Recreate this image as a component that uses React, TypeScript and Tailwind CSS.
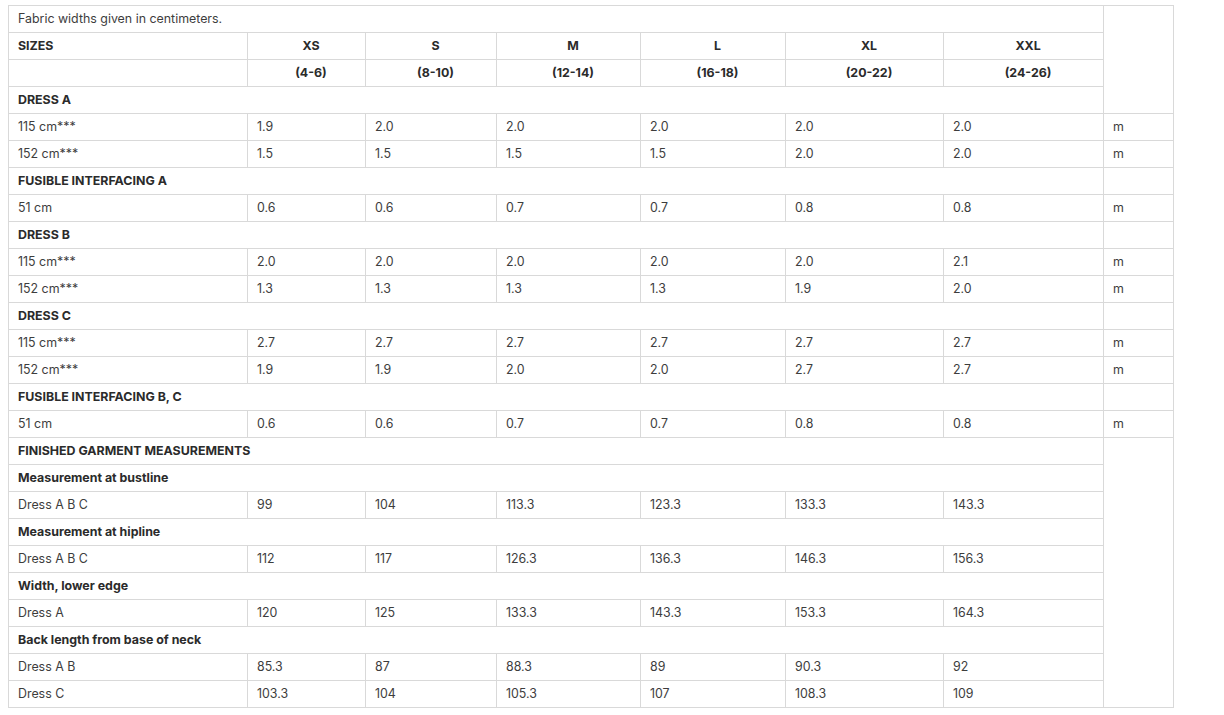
import React from "react";

type Row =
  | { kind: "section"; label: string; unit?: "empty" | "span" | "none" }
  | { kind: "data"; label: string; values: string[]; unit?: boolean };

const rows: Row[] = [
  { kind: "section", label: "DRESS A", unit: "none" },
  { kind: "data", label: "115 cm***", values: ["1.9", "2.0", "2.0", "2.0", "2.0", "2.0"], unit: true },
  { kind: "data", label: "152 cm***", values: ["1.5", "1.5", "1.5", "1.5", "2.0", "2.0"], unit: true },
  { kind: "section", label: "FUSIBLE INTERFACING A", unit: "empty" },
  { kind: "data", label: "51 cm", values: ["0.6", "0.6", "0.7", "0.7", "0.8", "0.8"], unit: true },
  { kind: "section", label: "DRESS B", unit: "empty" },
  { kind: "data", label: "115 cm***", values: ["2.0", "2.0", "2.0", "2.0", "2.0", "2.1"], unit: true },
  { kind: "data", label: "152 cm***", values: ["1.3", "1.3", "1.3", "1.3", "1.9", "2.0"], unit: true },
  { kind: "section", label: "DRESS C", unit: "empty" },
  { kind: "data", label: "115 cm***", values: ["2.7", "2.7", "2.7", "2.7", "2.7", "2.7"], unit: true },
  { kind: "data", label: "152 cm***", values: ["1.9", "1.9", "2.0", "2.0", "2.7", "2.7"], unit: true },
  { kind: "section", label: "FUSIBLE INTERFACING B, C", unit: "empty" },
  { kind: "data", label: "51 cm", values: ["0.6", "0.6", "0.7", "0.7", "0.8", "0.8"], unit: true },
  { kind: "section", label: "FINISHED GARMENT MEASUREMENTS", unit: "span" },
  { kind: "section", label: "Measurement at bustline", unit: "none" },
  { kind: "data", label: "Dress A B C", values: ["99", "104", "113.3", "123.3", "133.3", "143.3"] },
  { kind: "section", label: "Measurement at hipline", unit: "none" },
  { kind: "data", label: "Dress A B C", values: ["112", "117", "126.3", "136.3", "146.3", "156.3"] },
  { kind: "section", label: "Width, lower edge", unit: "none" },
  { kind: "data", label: "Dress A", values: ["120", "125", "133.3", "143.3", "153.3", "164.3"] },
  { kind: "section", label: "Back length from base of neck", unit: "none" },
  { kind: "data", label: "Dress A B", values: ["85.3", "87", "88.3", "89", "90.3", "92"] },
  { kind: "data", label: "Dress C", values: ["103.3", "104", "105.3", "107", "108.3", "109"] },
];

const sizes = [
  { name: "XS", range: "(4-6)" },
  { name: "S", range: "(8-10)" },
  { name: "M", range: "(12-14)" },
  { name: "L", range: "(16-18)" },
  { name: "XL", range: "(20-22)" },
  { name: "XXL", range: "(24-26)" },
];

const cell = "border border-[#d9d9d9] h-[27px] pl-[9px] pr-0 py-0 align-middle";
const bold = "font-bold text-[#2b2b2b]";

export default function App() {
  return (
    <div className="bg-white min-h-[715px] pl-2 pt-[5px] text-[#3d3d3d] text-[12.4px] font-['Inter',sans-serif]">
      <table className="border-collapse table-fixed w-[1165px]">
        <colgroup>
          <col className="w-[239px]" />
          <col className="w-[118px]" />
          <col className="w-[131px]" />
          <col className="w-[144px]" />
          <col className="w-[145px]" />
          <col className="w-[158px]" />
          <col className="w-[160px]" />
          <col className="w-[70px]" />
        </colgroup>
        <tbody>
          <tr>
            <td colSpan={7} className={cell}>Fabric widths given in centimeters.</td>
            <td rowSpan={4} className={cell}></td>
          </tr>
          <tr>
            <td className={`${cell} ${bold}`}>SIZES</td>
            {sizes.map((s) => (
              <td key={s.name} className={`${cell} ${bold} text-center`}>{s.name}</td>
            ))}
          </tr>
          <tr>
            <td className={cell}></td>
            {sizes.map((s) => (
              <td key={s.name} className={`${cell} ${bold} text-center`}>{s.range}</td>
            ))}
          </tr>
          {rows.map((row, i) =>
            row.kind === "section" ? (
              <tr key={i}>
                <td colSpan={7} className={`${cell} ${bold}`}>{row.label}</td>
                {row.unit === "empty" && <td className={cell}></td>}
                {row.unit === "span" && <td rowSpan={10} className={cell}></td>}
              </tr>
            ) : (
              <tr key={i}>
                <td className={cell}>{row.label}</td>
                {row.values.map((v, j) => (
                  <td key={j} className={cell}>{v}</td>
                ))}
                {row.unit && <td className={cell}>m</td>}
              </tr>
            )
          )}
        </tbody>
      </table>
    </div>
  );
}
